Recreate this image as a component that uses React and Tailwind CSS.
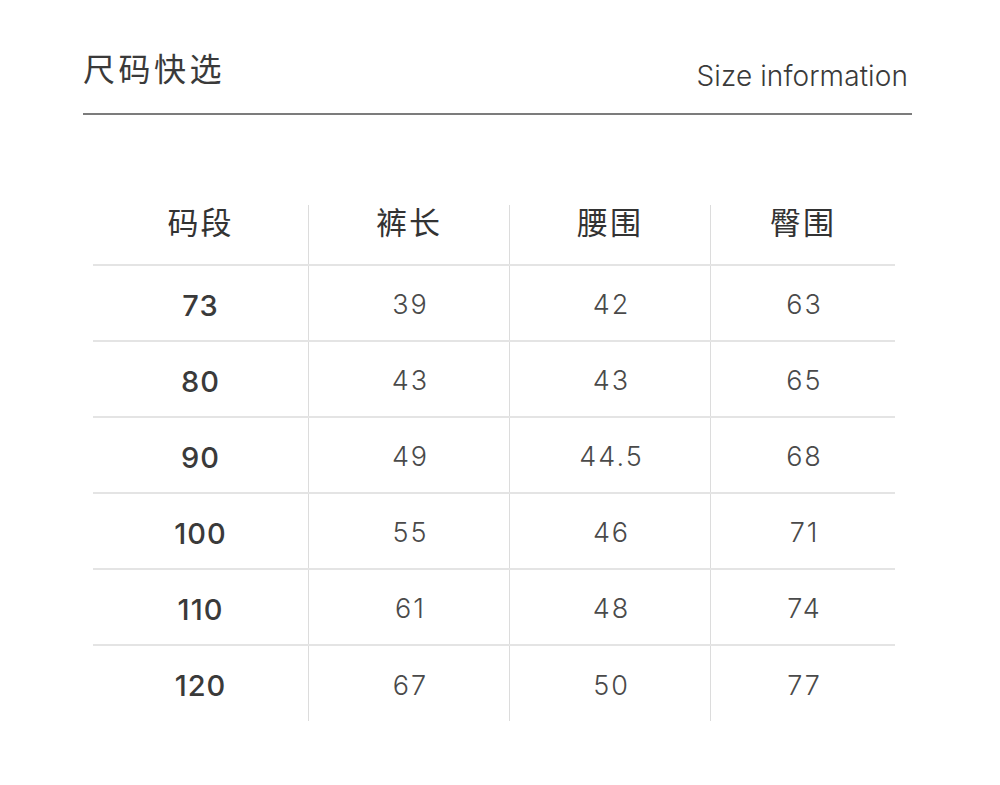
import React from 'react';

const rows = [
  ['73', '39', '42', '63'],
  ['80', '43', '43', '65'],
  ['90', '49', '44.5', '68'],
  ['100', '55', '46', '71'],
  ['110', '61', '48', '74'],
  ['120', '67', '50', '77'],
];

const headers = ['码段', '裤长', '腰围', '臀围'];

const cjk = { fontFamily: 'Inter, "Noto Sans CJK SC", sans-serif' };

const cols = 'grid grid-cols-[215px_201px_201px_185px]';

const App = () => {
  return (
    <div className="w-[1000px] h-[785px] bg-white text-[#333]" style={cjk}>
      <div className="pt-[50px] px-[83px] w-[995px]">
        <div className="flex items-end justify-between">
          <h1 className="text-[32px] leading-[40px] tracking-[3.5px] text-[#3a3a3a]">尺码快选</h1>
          <span className="text-[28px] leading-[34px] tracking-[0.1px] text-[#3a3a3a] mr-[4px] mb-[-3px] font-light">Size information</span>
        </div>
        <div className="mt-[23px] h-[2px] bg-[#7c7c7c]" />
      </div>

      <div className="ml-[93px] mt-[90px] w-[802px]">
        <div className={`${cols} h-[59px]`}>
          {headers.map((h, i) => (
            <div
              key={h}
              className={`flex items-start justify-center text-[31px] leading-[36px] tracking-[2px] text-[#333] ${i > 0 ? 'border-l border-[#dcdcdc]' : ''}`}
            >
              {h}
            </div>
          ))}
        </div>
        {rows.map((r, ri) => (
          <div
            key={r[0]}
            className={`${cols} border-t-2 border-[#e4e4e4] ${ri === rows.length - 1 ? 'h-[77px]' : 'h-[76px]'}`}
          >
            {r.map((v, i) => (
              <div
                key={i}
                className={`flex items-center justify-center pt-[5px] ${i > 0 ? 'border-l border-[#dcdcdc] text-[27px] font-light tracking-[2px] text-[#4a4a4a] pl-[3px]' : 'text-[29px] font-medium tracking-[1px] text-[#3a3a3a]'}`}
              >
                {v}
              </div>
            ))}
          </div>
        ))}
      </div>
    </div>
  );
};

export default App;
